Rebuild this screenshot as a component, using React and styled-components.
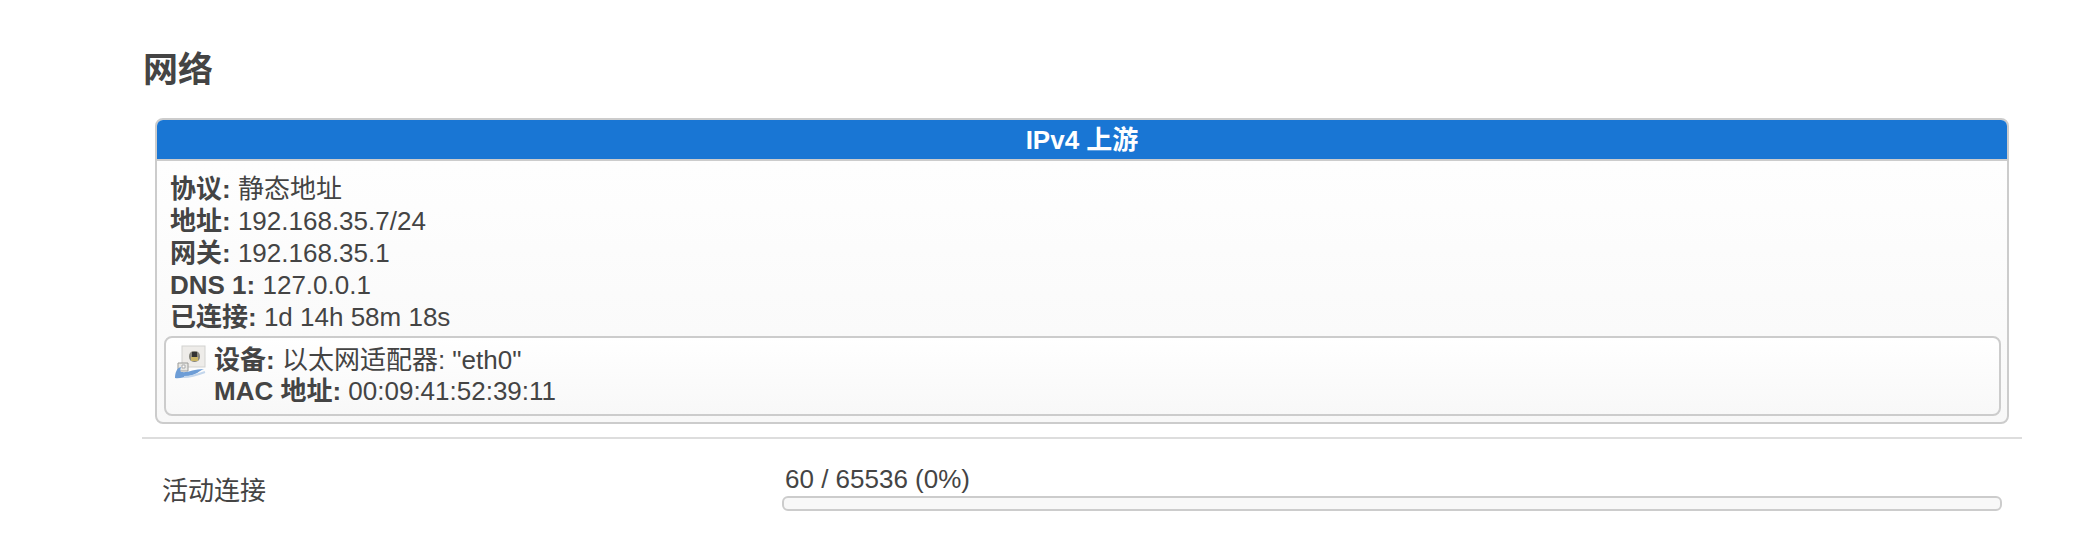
import React from 'react';
import styled, { createGlobalStyle } from 'styled-components';

const GlobalStyle = createGlobalStyle`
  html, body {
    margin: 0;
    padding: 0;
    background: #fff;
  }
  body {
    font-family: "Liberation Sans", "Noto Sans CJK SC", sans-serif;
    font-size: 26px;
    color: #444;
  }
`;

const Page = styled.div`
  width: 1880px;
  height: 544px;
  margin-left: 142px;
  overflow: hidden;
`;

const Title = styled.h3`
  margin: 0;
  padding: 46px 0 0 1px;
  height: 72px;
  font-size: 35px;
  line-height: 48px;
  font-weight: bold;
  color: #444;
`;

const Panel = styled.div`
  margin: 0 13px;
  border: 2px solid #ccc;
  border-radius: 8px;
  overflow: hidden;
  background: linear-gradient(#fff, #f8f8f8);
`;

const PanelHead = styled.div`
  height: 39px;
  line-height: 41px;
  background: #1976d4;
  border-bottom: 2px solid #ccc;
  color: #fff;
  font-weight: bold;
  text-align: center;
`;

const PanelBody = styled.div`
  padding: 12px 6px 6px 7px;
`;

const InfoLine = styled.div`
  line-height: 32px;
  padding-left: 6px;
  white-space: nowrap;
`;

const Key = styled.b`
  font-weight: bold;
`;

const DeviceBox = styled.div`
  display: flex;
  margin-top: 3px;
  height: 80px;
  box-sizing: border-box;
  padding: 7px 8px;
  gap: 8px;
  border: 2px solid #ccc;
  border-radius: 8px;
  background: linear-gradient(#fff, #f8f8f8);
`;

const DeviceLine = styled.div`
  line-height: 31px;
  white-space: nowrap;
`;

const Divider = styled.hr`
  margin: 13px 0 0;
  border: 0;
  border-top: 2px solid #ddd;
`;

const StatRow = styled.div`
  display: grid;
  grid-template-columns: 640px 1220px;
  padding-top: 25px;
`;

const StatLabel = styled.div`
  padding: 11px 0 0 20px;
  line-height: 32px;
`;

const StatValue = styled.div`
  line-height: 30px;
  padding-left: 3px;
`;

const Progress = styled.div`
  margin-top: 2px;
  height: 15px;
  box-sizing: border-box;
  border: 2px solid #ccc;
  border-radius: 6px;
  background: #f8f8f8;
`;

const EthernetIcon = () => (
  <svg width="32" height="34" viewBox="0 0 32 34" style={{ flex: 'none' }}>
    <rect x="8" y="1" width="23" height="21" fill="#eeece9" stroke="#d2d2cf" />
    <rect x="15" y="6" width="11" height="11" rx="5" fill="#8a887f" />
    <rect x="17" y="12" width="7" height="4" fill="#c9b465" />
    <rect x="18" y="7" width="5" height="5" fill="#333" />
    <path d="M4 18h10v8H4z" fill="#e8e8e5" stroke="#9b9b98" />
    <path d="M8 20h3v3H8z" fill="#fff" stroke="#aaa" />
    <path
      d="M1 33c0-6 2-10 6-11-1 3-1 5 1 5 5 1 12-3 22-3-5 2-8 6-15 7-5 1-10 3-14 2z"
      fill="#6d9dd6"
    />
    <path d="M10 32c6 0 13-2 21-5" stroke="#c3d6ec" strokeWidth="2" fill="none" />
  </svg>
);

const App = () => (
  <Page>
    <GlobalStyle />
    <Title>网络</Title>
    <Panel>
      <PanelHead>IPv4 上游</PanelHead>
      <PanelBody>
        <InfoLine><Key>协议:</Key> 静态地址</InfoLine>
        <InfoLine><Key>地址:</Key> 192.168.35.7/24</InfoLine>
        <InfoLine><Key>网关:</Key> 192.168.35.1</InfoLine>
        <InfoLine><Key>DNS 1:</Key> 127.0.0.1</InfoLine>
        <InfoLine><Key>已连接:</Key> 1d 14h 58m 18s</InfoLine>
        <DeviceBox>
          <EthernetIcon />
          <div>
            <DeviceLine><Key>设备:</Key> 以太网适配器: "eth0"</DeviceLine>
            <DeviceLine><Key>MAC 地址:</Key> 00:09:41:52:39:11</DeviceLine>
          </div>
        </DeviceBox>
      </PanelBody>
    </Panel>
    <Divider />
    <StatRow>
      <StatLabel>活动连接</StatLabel>
      <div>
        <StatValue>60 / 65536 (0%)</StatValue>
        <Progress />
      </div>
    </StatRow>
  </Page>
);

export default App;
